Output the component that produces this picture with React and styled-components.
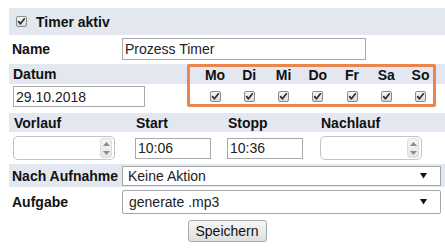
import React from 'react';
import styled, { createGlobalStyle } from 'styled-components';

const BAND = '#e3e8f0';

const Global = createGlobalStyle`
  html, body { margin: 0; padding: 0; background: #fff; }
  body {
    font-family: "Liberation Sans", Arial, sans-serif;
    font-size: 14px;
    color: #111;
  }
`;

const Form = styled.div`
  margin: 8px 0 0 9px;
  width: 436px;
  display: flex;
  flex-direction: column;
`;

const HeaderBar = styled.div`
  height: 27px;
  background: ${BAND};
  display: flex;
  align-items: center;
  gap: 9px;
  padding-left: 7px;
  font-weight: bold;
`;

const Row = styled.div`
  height: ${p => p.$h}px;
  margin-top: ${p => p.$mt || 0}px;
  background: ${p => (p.$band ? BAND : 'transparent')};
  display: flex;
  align-items: center;
`;

const Label = styled.div`
  width: 113px;
  flex: none;
  padding-left: 3px;
  box-sizing: border-box;
  font-weight: bold;
  white-space: nowrap;
`;

const TextBox = styled.div`
  width: ${p => p.$w}px;
  height: ${p => p.$h || 21}px;
  box-sizing: border-box;
  border: 1px solid #a9a9a9;
  background: #fff;
  color: #222;
  display: flex;
  align-items: center;
  padding-left: 2px;
  margin-left: ${p => p.$ml || 0}px;
  margin-top: ${p => p.$mt || 0}px;
  font-size: 14px;
`;

const DateSection = styled.div`
  margin-top: 1px;
  height: 43px;
  display: flex;
  background: linear-gradient(to bottom, ${BAND} 20px, #fff 20px);
`;

const DateCol = styled.div`
  width: 178px;
  display: flex;
  flex-direction: column;
`;

const BandLabel = styled.div`
  height: 20px;
  display: flex;
  align-items: center;
  padding-left: 4px;
  font-weight: bold;
`;

const OrangeBox = styled.div`
  box-sizing: border-box;
  width: 249px;
  height: 43px;
  border: 3px solid #e9854d;
  border-radius: 2px;
  padding: 0 1px 0 14px;
  display: grid;
  grid-template-columns: repeat(7, 22px);
  grid-template-rows: 17px 20px;
  column-gap: 12.25px;
  background: linear-gradient(to bottom, ${BAND} 17px, #fff 17px);
`;

const DayLabel = styled.div`
  font-weight: bold;
  line-height: 17px;
  white-space: nowrap;
  display: flex;
  justify-content: center;
`;

const DayCheck = styled.div`
  display: flex;
  justify-content: center;
  align-items: flex-end;
  padding-bottom: 2px;
`;

const TimeSection = styled.div`
  margin-top: 6px;
  display: flex;
  flex-direction: column;
`;

const TimeGrid = styled.div`
  display: grid;
  grid-template-columns: 122px 92px 93px 1fr;
  padding-left: 4px;
  height: ${p => p.$h}px;
  margin-top: ${p => p.$mt || 0}px;
  background: ${p => (p.$band ? BAND : 'transparent')};
  align-items: center;
`;

const TimeLabel = styled.div`
  font-weight: bold;
  padding-left: 1px;
`;

const Spinner = styled.div`
  width: 102px;
  height: 24px;
  box-sizing: border-box;
  border: 1px solid #c3c3c3;
  border-radius: 5px;
  background: #fff;
  display: flex;
  justify-content: flex-end;
  align-items: center;
  padding-right: 2px;
`;

const SpinButtons = styled.div`
  width: 12px;
  height: 20px;
  border-radius: 3px;
  background: linear-gradient(to bottom, #f3f3f3, #e6e6e6);
  border: 1px solid #dcdcdc;
  box-sizing: border-box;
  display: flex;
  flex-direction: column;
  align-items: center;
  justify-content: space-around;
`;

const Select = styled.div`
  width: 319px;
  height: ${p => p.$h}px;
  box-sizing: border-box;
  border: 1px solid #a6a6a6;
  border-radius: ${p => p.$r || 0}px;
  background: #fff;
  color: #222;
  display: flex;
  align-items: center;
  justify-content: space-between;
  padding: 0 13px 0 ${p => p.$pl || 5}px;
`;

const ButtonRow = styled.div`
  margin-top: 4px;
  display: flex;
  justify-content: center;
`;

const Button = styled.div`
  height: 22px;
  width: 79px;
  box-sizing: border-box;
  border: 1px solid #a8a8a8;
  border-radius: 3px;
  background: linear-gradient(to bottom, #f6f6f6, #dedede);
  display: flex;
  align-items: center;
  justify-content: center;
  color: #111;
  font-size: 14px;
`;

const Check = () => (
  <svg width="11" height="11" viewBox="0 0 11 11" style={{ display: 'block' }}>
    <defs>
      <linearGradient id="cbg" x1="0" y1="0" x2="0" y2="1">
        <stop offset="0" stopColor="#f7f7f7" />
        <stop offset="1" stopColor="#d9d9d9" />
      </linearGradient>
    </defs>
    <rect x="0.5" y="0.5" width="10" height="10" rx="1.5" fill="url(#cbg)" stroke="#8a8a8a" />
    <path d="M2.6 5.6 L4.4 7.8 L8.4 2.8" fill="none" stroke="#2e2e2e" strokeWidth="1.7" strokeLinecap="round" strokeLinejoin="round" />
  </svg>
);

const Arrow = () => (
  <svg width="7" height="7" viewBox="0 0 7 7" style={{ display: 'block' }}>
    <path d="M0 1 L7 1 L3.5 6.5 Z" fill="#111" />
  </svg>
);

const SpinArrows = () => (
  <SpinButtons>
    <svg width="7" height="4" viewBox="0 0 7 4" style={{ display: 'block' }}>
      <path d="M0 4 L3.5 0 L7 4 Z" fill="#8d8d8d" />
    </svg>
    <svg width="7" height="4" viewBox="0 0 7 4" style={{ display: 'block' }}>
      <path d="M0 0 L7 0 L3.5 4 Z" fill="#8d8d8d" />
    </svg>
  </SpinButtons>
);

const days = ['Mo', 'Di', 'Mi', 'Do', 'Fr', 'Sa', 'So'];

export default function App() {
  return (
    <>
      <Global />
      <Form>
        <HeaderBar>
          <Check />
          <span>Timer aktiv</span>
        </HeaderBar>
        <Row $h={28}>
          <Label>Name</Label>
          <TextBox $w={244} $h={22}>Prozess Timer</TextBox>
        </Row>
        <DateSection>
          <DateCol>
            <BandLabel>Datum</BandLabel>
            <TextBox $w={132} $ml={4} $mt={2}>29.10.2018</TextBox>
          </DateCol>
          <OrangeBox>
            {days.map(d => (
              <DayLabel key={d}>{d}</DayLabel>
            ))}
            {days.map(d => (
              <DayCheck key={d + 'c'}>
                <Check />
              </DayCheck>
            ))}
          </OrangeBox>
        </DateSection>
        <TimeSection>
          <TimeGrid $band $h={19}>
            <TimeLabel>Vorlauf</TimeLabel>
            <TimeLabel>Start</TimeLabel>
            <TimeLabel>Stopp</TimeLabel>
            <TimeLabel>Nachlauf</TimeLabel>
          </TimeGrid>
          <TimeGrid $h={24} $mt={4}>
            <Spinner><SpinArrows /></Spinner>
            <TextBox $w={76}>10:06</TextBox>
            <TextBox $w={76}>10:36</TextBox>
            <Spinner><SpinArrows /></Spinner>
          </TimeGrid>
        </TimeSection>
        <Row $h={23} $mt={4} $band>
          <Label>Nach Aufnahme</Label>
          <Select $h={20}>
            <span>Keine Aktion</span>
            <Arrow />
          </Select>
        </Row>
        <Row $h={29}>
          <Label>Aufgabe</Label>
          <Select $h={24} $r={2} $pl={6}>
            <span>generate .mp3</span>
            <Arrow />
          </Select>
        </Row>
        <ButtonRow>
          <Button>Speichern</Button>
        </ButtonRow>
      </Form>
    </>
  );
}
